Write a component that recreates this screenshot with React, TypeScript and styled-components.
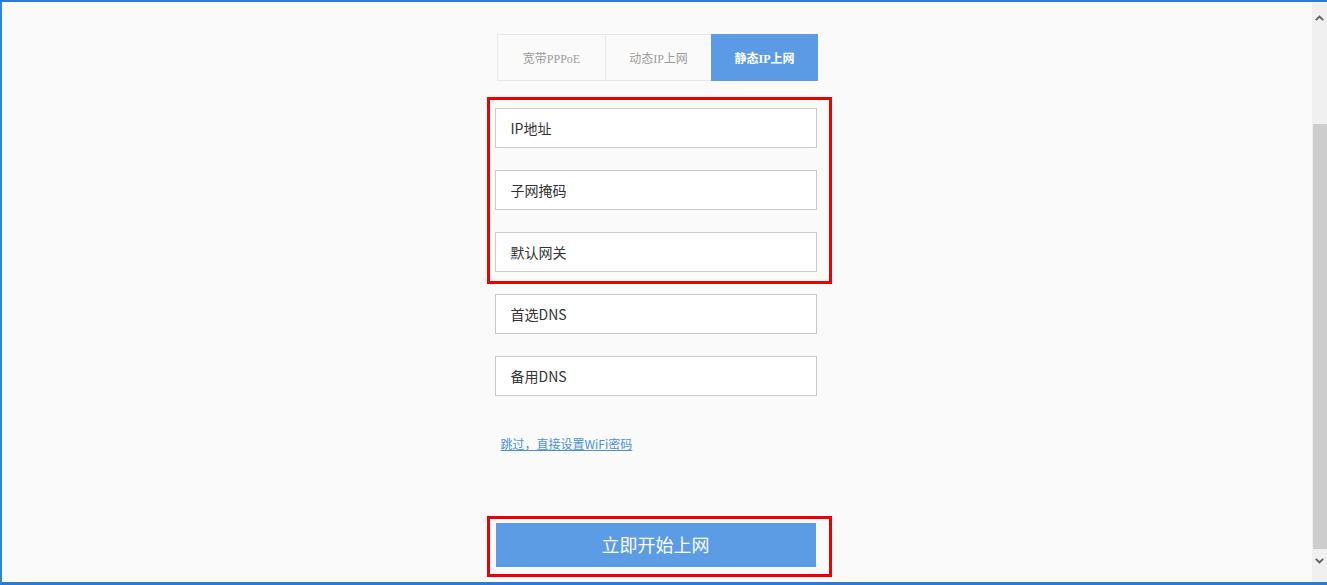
import React from 'react'
import styled, { createGlobalStyle } from 'styled-components'

const GlobalStyle = createGlobalStyle`
    html, body {
        margin: 0;
        padding: 0;
        background: #fafafa;
        font-family: "Noto Sans CJK SC", "Liberation Sans", sans-serif;
    }
`

const tabs = ['宽带PPPoE', '动态IP上网', '静态IP上网']
const activeTab = 2

const fields = ['IP地址', '子网掩码', '默认网关']
const dnsFields = ['首选DNS', '备用DNS']

function Chevron({ up }: { up?: boolean }) {
    return (
        <svg width="9" height="6" viewBox="0 0 9 6">
            <path
                d={up ? 'M0.8 5.2 L4.5 1.5 L8.2 5.2' : 'M0.8 0.8 L4.5 4.5 L8.2 0.8'}
                fill="none"
                stroke="#606060"
                strokeWidth="1.8"
            />
        </svg>
    )
}

export default function App() {
    return (
        <>
            <GlobalStyle />
            <Window>
                <Content>
                    <TabBar>
                        {tabs.map((t, i) => (
                            <Tab key={t} active={i === activeTab} wide={i !== 1}>
                                {t}
                            </Tab>
                        ))}
                    </TabBar>
                    <Form>
                        <Marked inset={[11, 15, 12, 8]}>
                            {fields.map(f => (
                                <Field key={f}>{f}</Field>
                            ))}
                        </Marked>
                        {dnsFields.map(f => (
                            <Field key={f}>{f}</Field>
                        ))}
                        <SkipLink href="#">跳过，直接设置WiFi密码</SkipLink>
                        <ButtonRow>
                            <Marked inset={[7, 16, 10, 9]}>
                                <SubmitButton>立即开始上网</SubmitButton>
                            </Marked>
                        </ButtonRow>
                    </Form>
                </Content>
                <ScrollBar>
                    <ArrowButton>
                        <Chevron up />
                    </ArrowButton>
                    <Track>
                        <Thumb style={{ marginTop: 89, height: 425 }} />
                    </Track>
                    <ArrowButton bottom>
                        <Chevron />
                    </ArrowButton>
                </ScrollBar>
            </Window>
        </>
    )
}

const Window = styled.div`
    width: 1327px;
    height: 585px;
    box-sizing: border-box;
    display: flex;
    border-top: 2px solid #2b7bd0;
    border-left: 2px solid #2f86dc;
    border-bottom: 3px solid #2b7bd0;
    background: #fafafa;
    overflow: hidden;
`

const Content = styled.div`
    flex: 1;
    display: flex;
    flex-direction: column;
    align-items: center;
    padding-top: 32px;
    padding-right: 3px;
`

const TabBar = styled.div`
    display: flex;
    width: 319px;
    height: 47px;
    box-sizing: border-box;
    border: 1px solid #e8e8e8;
    margin-bottom: 27px;
    margin-right: -2px;
`

const Tab = styled.div<{ active?: boolean; wide?: boolean }>`
    flex: 0 0 ${p => (p.wide ? '107px' : '105px')};
    display: flex;
    align-items: center;
    justify-content: center;
    font-family: "Liberation Serif", "Noto Sans CJK SC", serif;
    font-size: 12px;
    font-weight: ${p => (p.active ? 700 : 400)};
    color: ${p => (p.active ? '#ffffff' : '#9a9a9a')};
    background: ${p => (p.active ? '#5b9be5' : 'transparent')};
    border-left: ${p => (p.active ? 'none' : '1px solid #e8e8e8')};
    margin: ${p => (p.active ? '-1px -1px -1px 0' : '0')};
    &:first-child {
        border-left: none;
    }
`

const Form = styled.div`
    width: 322px;
    display: flex;
    flex-direction: column;
    gap: 22px;
`

const Marked = styled.div<{ inset: [number, number, number, number] }>`
    position: relative;
    display: flex;
    flex-direction: column;
    gap: 22px;
    &::after {
        content: '';
        position: absolute;
        top: -${p => p.inset[0]}px;
        right: -${p => p.inset[1]}px;
        bottom: -${p => p.inset[2]}px;
        left: -${p => p.inset[3]}px;
        border: 3px solid #ee0000;
        pointer-events: none;
    }
`

const Field = styled.div`
    height: 40px;
    box-sizing: border-box;
    border: 1px solid #c9c9c9;
    background: #ffffff;
    display: flex;
    align-items: center;
    padding-left: 15px;
    font-size: 14px;
    color: #333333;
`

const SkipLink = styled.a`
    margin-top: 18px;
    padding-left: 6px;
    font-size: 12px;
    line-height: 16px;
    color: #4a8fda;
    text-decoration: underline;
`

const ButtonRow = styled.div`
    margin-top: 49px;
    display: flex;
    justify-content: center;
`

const SubmitButton = styled.button`
    width: 320px;
    height: 44px;
    padding: 0 0 3px;
    border: none;
    background: #5c9ce5;
    color: #ffffff;
    font-family: "Liberation Serif", "Noto Sans CJK SC", serif;
    font-size: 18px;
    cursor: pointer;
`

const ScrollBar = styled.div`
    width: 15px;
    display: flex;
    flex-direction: column;
    background: #f0f0f0;
`

const ArrowButton = styled.div<{ bottom?: boolean }>`
    height: 36px;
    display: flex;
    justify-content: center;
    align-items: ${p => (p.bottom ? 'flex-start' : 'center')};
    padding-top: ${p => (p.bottom ? '9px' : '0')};
    box-sizing: border-box;
`

const Track = styled.div`
    flex: 1;
    display: flex;
    flex-direction: column;
    align-items: stretch;
`

const Thumb = styled.div`
    margin-left: 1px;
    background: #cdcdcd;
`
